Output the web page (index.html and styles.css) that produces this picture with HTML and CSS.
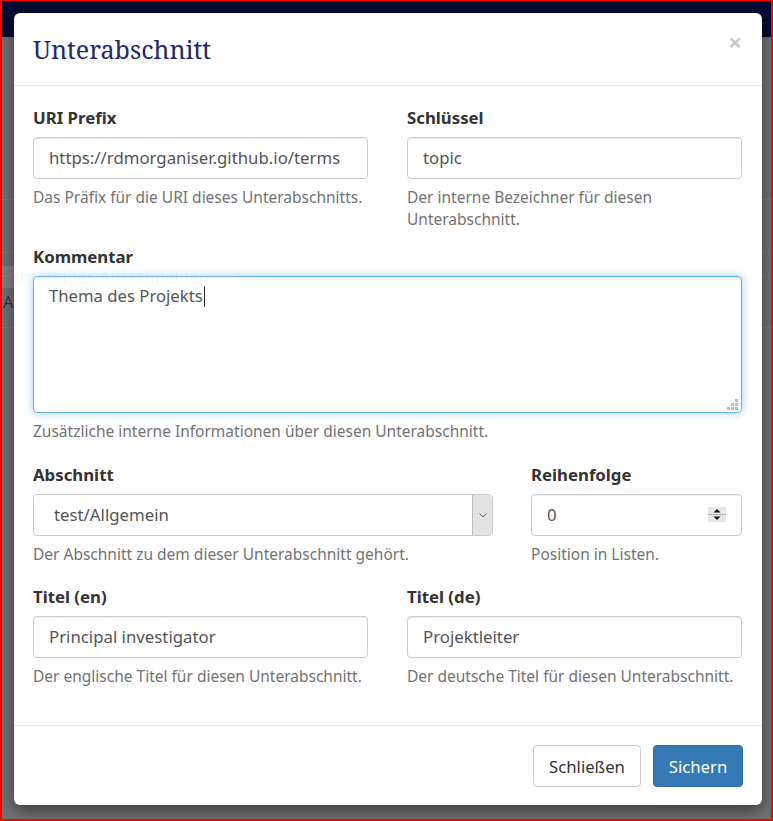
FILE: index.html
```html
<!DOCTYPE html>
<html lang="de">
<head>
<meta charset="utf-8">
<title>Unterabschnitt</title>
<link rel="stylesheet" href="styles.css">
</head>
<body>
<div class="screen">
  <div class="navbar"></div>
  <div class="page">
    <div class="bg-row bg-row-1"></div>
    <div class="bg-row bg-row-2"></div>
    <div class="bg-row bg-row-3"><span class="bg-letter">A</span></div>
  </div>

  <div class="modal" role="dialog">
    <div class="modal-header">
      <h4 class="modal-title">Unterabschnitt</h4>
      <span class="close">×</span>
    </div>
    <div class="modal-body">
      <div class="row row-half row-first">
        <div class="field">
          <label class="label">URI Prefix</label>
          <div class="input">https://rdmorganiser.github.io/terms</div>
          <p class="help">Das Präfix für die URI dieses Unterabschnitts.</p>
        </div>
        <div class="field">
          <label class="label">Schlüssel</label>
          <div class="input">topic</div>
          <p class="help">Der interne Bezeichner für diesen Unterabschnitt.</p>
        </div>
      </div>

      <div class="row row-second">
        <div class="field">
          <label class="label">Kommentar</label>
          <div class="textarea">Thema des Projekts<span class="caret"></span>
            <svg class="grip" width="11" height="11" viewBox="0 0 11 11">
              <rect x="8" y="0" width="3" height="3" fill="#bdbdbd"/>
              <rect x="4" y="4" width="3" height="3" fill="#bdbdbd"/>
              <rect x="8" y="4" width="3" height="3" fill="#bdbdbd"/>
              <rect x="0" y="8" width="3" height="3" fill="#bdbdbd"/>
              <rect x="4" y="8" width="3" height="3" fill="#bdbdbd"/>
              <rect x="8" y="8" width="3" height="3" fill="#bdbdbd"/>
            </svg>
          </div>
          <p class="help">Zusätzliche interne Informationen über diesen Unterabschnitt.</p>
        </div>
      </div>

      <div class="row row-wide">
        <div class="field">
          <label class="label">Abschnitt</label>
          <div class="select">
            <span class="select-value">test/Allgemein</span>
            <span class="select-btn">
              <svg width="8" height="5" viewBox="0 0 8 5"><path d="M0.5 0.5 L4 4 L7.5 0.5" fill="none" stroke="#666" stroke-width="1"/></svg>
            </span>
          </div>
          <p class="help">Der Abschnitt zu dem dieser Unterabschnitt gehört.</p>
        </div>
        <div class="field">
          <label class="label">Reihenfolge</label>
          <div class="input number">
            <span>0</span>
            <span class="spinner">
              <svg width="18" height="15" viewBox="0 0 18 15">
                <rect x="0" y="0" width="18" height="15" fill="#e6e6e6"/>
                <line x1="0" y1="7.5" x2="18" y2="7.5" stroke="#b5b5b5" stroke-width="1"/>
                <path d="M5.5 5.5 L9 2 L12.5 5.5 Z" fill="#111"/>
                <path d="M5.5 9.5 L9 13 L12.5 9.5 Z" fill="#111"/>
              </svg>
            </span>
          </div>
          <p class="help">Position in Listen.</p>
        </div>
      </div>

      <div class="row row-half">
        <div class="field">
          <label class="label">Titel (en)</label>
          <div class="input">Principal investigator</div>
          <p class="help">Der englische Titel für diesen Unterabschnitt.</p>
        </div>
        <div class="field">
          <label class="label">Titel (de)</label>
          <div class="input">Projektleiter</div>
          <p class="help">Der deutsche Titel für diesen Unterabschnitt.</p>
        </div>
      </div>
    </div>
    <div class="modal-footer">
      <button class="btn btn-default">Schließen</button>
      <button class="btn btn-primary">Sichern</button>
    </div>
  </div>

  <div class="tooltip">Rechteckiges Ausschneiden</div>
</div>
</body>
</html>
```

FILE: styles.css
```css
* { box-sizing: border-box; }

html, body {
  margin: 0;
  padding: 0;
}

body {
  font-family: "Noto Sans", "Open Sans", sans-serif;
  color: #333;
}

.screen {
  position: relative;
  width: 773px;
  height: 821px;
  overflow: hidden;
  background: #717171;
  border: 2px solid #ff0000;
  border-top-width: 1px;
}

.navbar {
  height: 36px;
  background: #050c33;
}

.page {
  padding-top: 162px;
}

.bg-row {
  height: 53px;
  border-top: 1px solid #7c7c7c;
}

.bg-row-2 {
  height: 23px;
}

.bg-row-3 {
  height: 53px;
  border-bottom: 1px solid #7c7c7c;
  padding-top: 15px;
}

.bg-letter {
  display: block;
  font-size: 16px;
  color: #2a3650;
  margin-left: 1px;
}

.modal {
  position: absolute;
  left: 12px;
  top: 12px;
  width: 748px;
  background: #fff;
  border-radius: 6px;
  box-shadow: 0 5px 15px rgba(0, 0, 0, 0.5);
}

.modal-header {
  display: flex;
  justify-content: space-between;
  align-items: flex-start;
  padding: 20px 20px 20px 19px;
  border-bottom: 1px solid #e5e5e5;
}

.modal-title {
  margin: 0;
  font-family: "Noto Serif", "DejaVu Serif", serif;
  font-weight: normal;
  font-size: 25px;
  line-height: 32px;
  color: #1d2a6c;
}

.close {
  font-size: 24px;
  font-weight: bold;
  line-height: 24px;
  color: #c9c9c9;
  margin-top: -3px;
}

.modal-body {
  padding: 21px 20px 38px 19px;
}

.row {
  display: grid;
  column-gap: 39px;
  margin-bottom: 21px;
}

.row:last-child {
  margin-bottom: 0;
}

.row-half {
  grid-template-columns: 1fr 1fr;
}

.row-first {
  margin-bottom: 16px;
}

.row-second {
  margin-bottom: 22px;
}

.row-wide {
  grid-template-columns: 460px 1fr;
  column-gap: 38px;
}

.label {
  display: block;
  font-size: 16.8px;
  font-weight: bold;
  line-height: 22px;
  color: #333;
  margin-bottom: 8px;
}

.input {
  display: flex;
  align-items: center;
  height: 42px;
  padding: 0 15px 1px;
  border: 1px solid #cccccc;
  border-radius: 4px;
  font-size: 16.8px;
  color: #555;
  white-space: nowrap;
  overflow: hidden;
  box-shadow: inset 0 1px 1px rgba(0, 0, 0, 0.075);
}

.number {
  justify-content: space-between;
  padding-right: 15px;
}

.spinner {
  display: flex;
}

.textarea {
  position: relative;
  height: 137px;
  padding: 8px 15px;
  border: 1px solid #66afe9;
  border-radius: 4px;
  font-size: 16.7px;
  line-height: 22px;
  color: #555;
  box-shadow: inset 0 1px 1px rgba(0, 0, 0, 0.075), 0 0 8px rgba(102, 175, 233, 0.6);
}

.caret {
  display: inline-block;
  width: 1px;
  height: 21px;
  background: #222;
  vertical-align: -5px;
  margin-left: 1px;
}

.grip {
  position: absolute;
  right: 3px;
  bottom: 2px;
}

.select {
  display: flex;
  align-items: stretch;
  height: 42px;
  border: 1px solid #cccccc;
  border-radius: 4px;
  overflow: hidden;
  font-size: 16.8px;
  color: #555;
}

.select-value {
  flex: 1;
  display: flex;
  align-items: center;
  padding-left: 20px;
  padding-bottom: 1px;
}

.select-btn {
  width: 20px;
  display: flex;
  align-items: center;
  justify-content: center;
  background: #e3e3e3;
  border-left: 1px solid #bdbdbd;
}

.help {
  margin: 7px 0 0;
  font-size: 15.5px;
  line-height: 22px;
  color: #737373;
}

.modal-footer {
  display: flex;
  justify-content: flex-end;
  gap: 12px;
  padding: 19px 19px 18px 19px;
  border-top: 1px solid #e5e5e5;
}

.btn {
  height: 42px;
  padding: 0 12px;
  border-radius: 4px;
  font-family: "Noto Sans", "Open Sans", sans-serif;
  font-size: 16.7px;
  border: 1px solid #ccc;
  cursor: pointer;
}

.btn-default {
  background: #fff;
  color: #333;
  width: 108px;
}

.btn-primary {
  background: #337ab7;
  border-color: #2e6da4;
  color: #fff;
  width: 90px;
}

.tooltip {
  position: absolute;
  left: -12px;
  top: 265px;
  width: 244px;
  height: 22px;
  padding-left: 2px;
  font-size: 16.8px;
  line-height: 22px;
  color: rgba(0, 0, 0, 0.05);
  background: rgba(255, 255, 255, 0.1);
  white-space: nowrap;
}
```
